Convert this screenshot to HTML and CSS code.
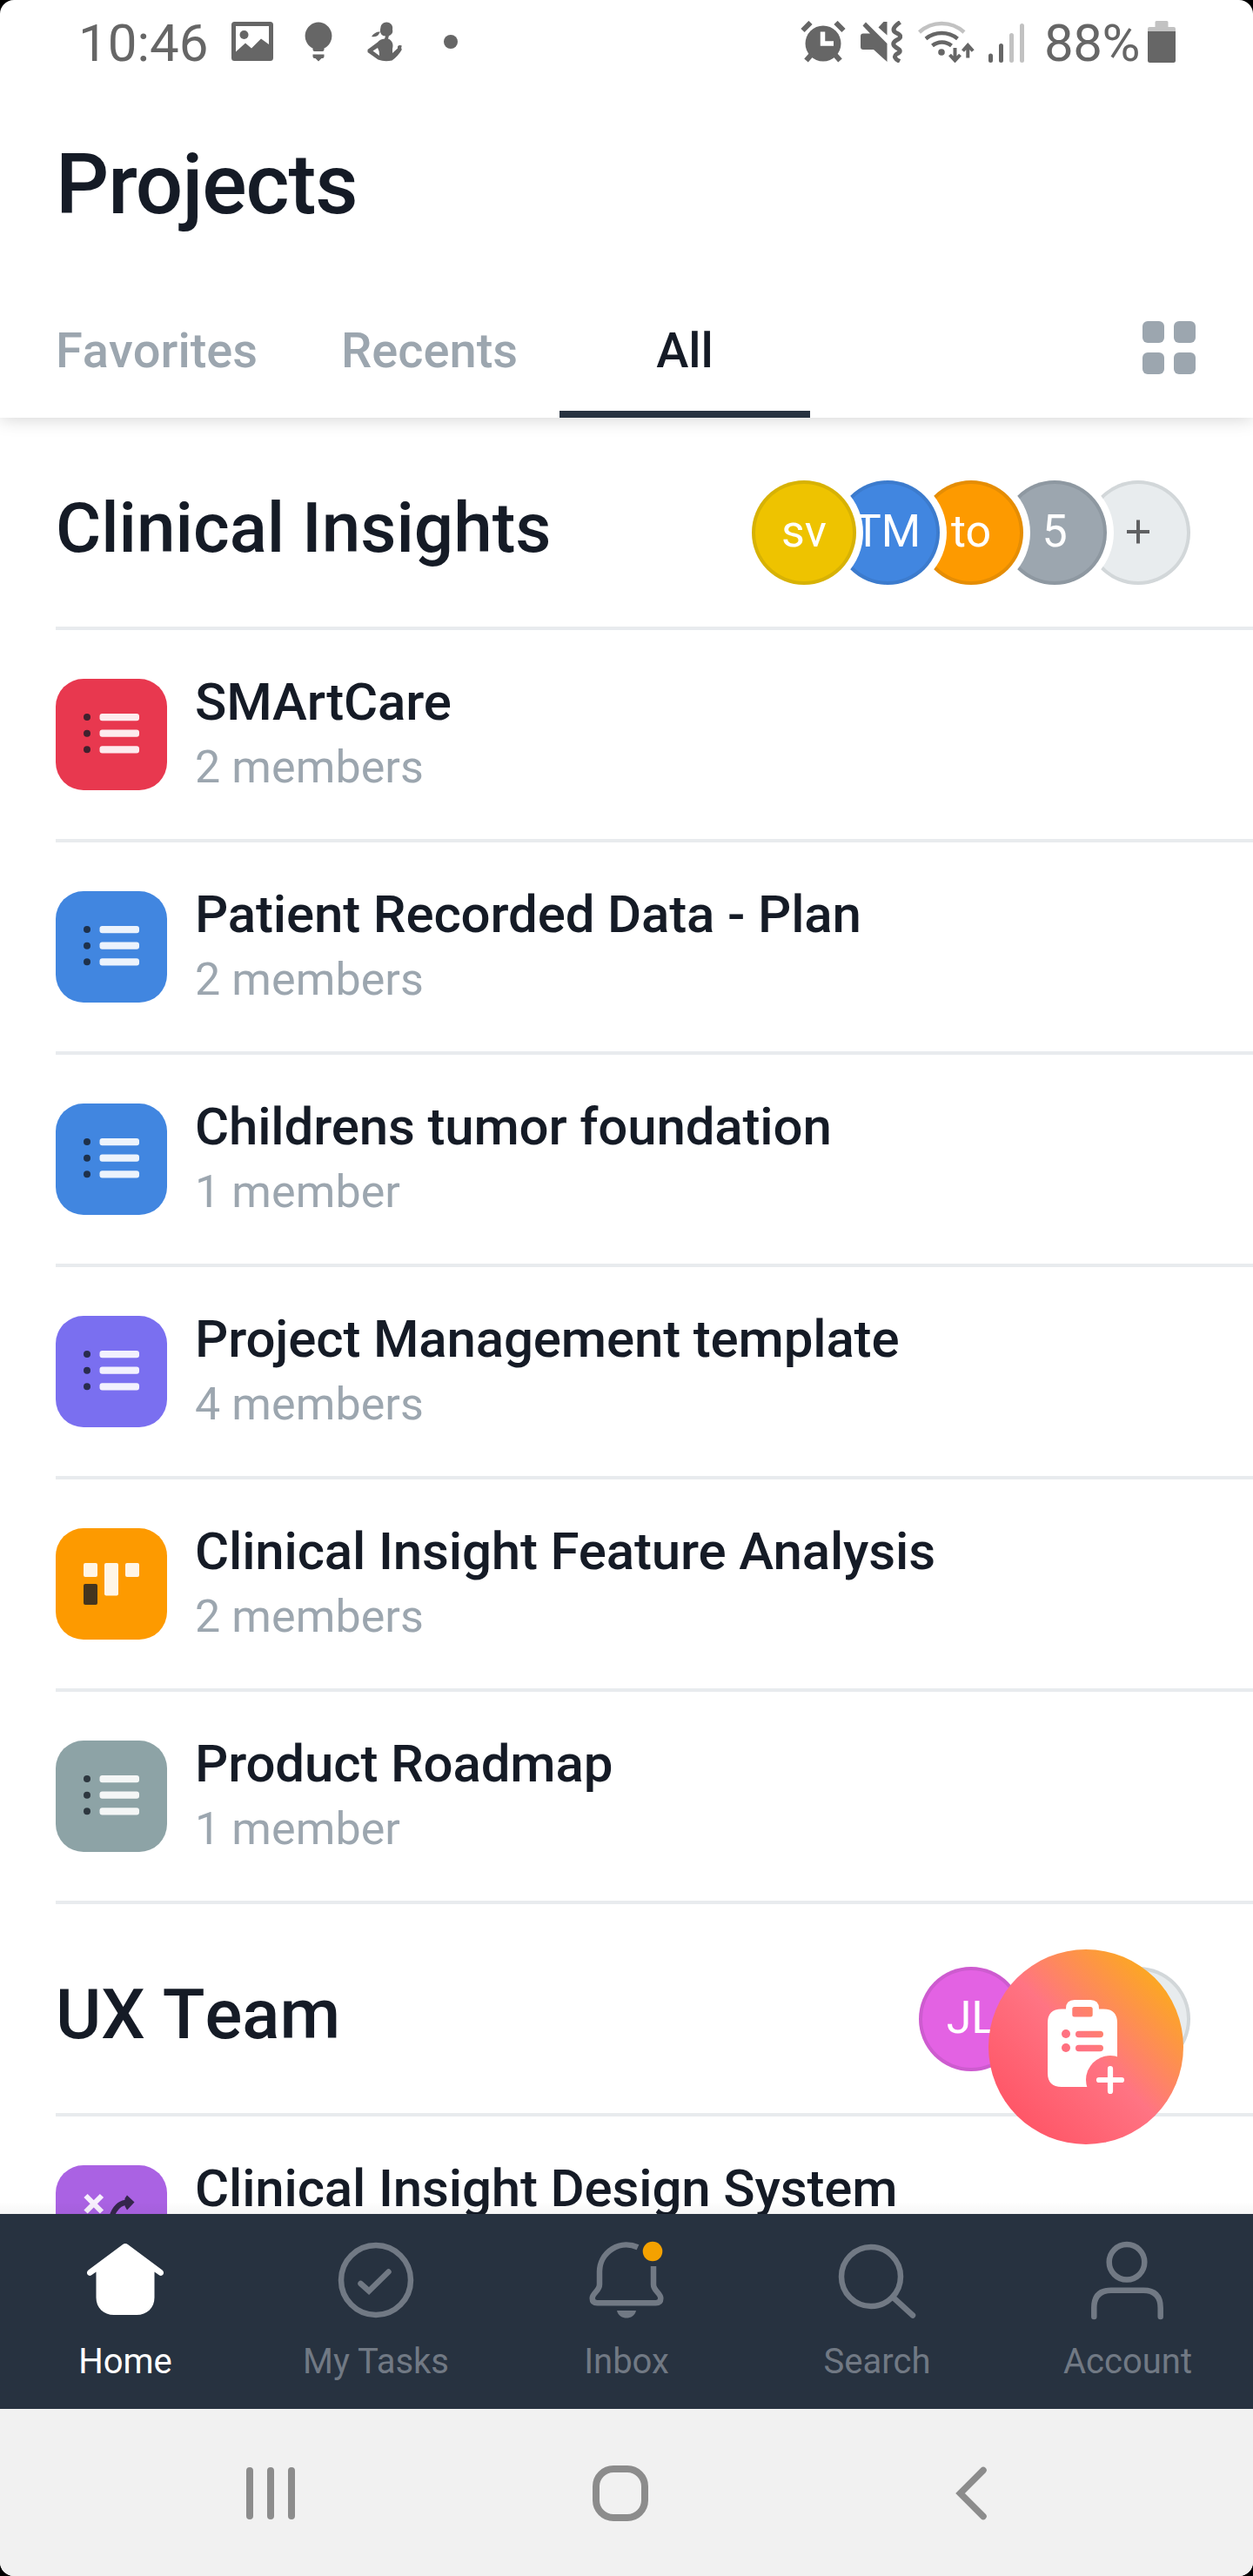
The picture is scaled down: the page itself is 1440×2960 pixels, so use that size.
FILE: index.html
```html
<!DOCTYPE html>
<html lang="en">
<head>
<meta charset="utf-8">
<title>Projects</title>
<link rel="stylesheet" href="styles.css">
</head>
<body>
<svg width="0" height="0" class="defs" aria-hidden="true">
  <symbol id="list" viewBox="0 0 128 128">
    <g fill="#151b26" fill-opacity=".8"><circle cx="36" cy="44" r="4"/><circle cx="36" cy="62.7" r="4"/><circle cx="36" cy="81.3" r="4"/></g>
    <g fill="#fff" fill-opacity=".9"><rect x="50.5" y="40" width="45.500" height="8.300" rx="3"/><rect x="50.500" y="58.500" width="45.500" height="8.300" rx="3"/><rect x="50.500" y="77.200" width="45.500" height="8.300" rx="3"/></g>
  </symbol>
</svg>
<div class="screen">
  <div class="status">
    <span class="clock">10:46</span>
    <svg class="st-image" width="48" height="48" viewBox="0 0 48 48"><path fill="#666" fill-rule="evenodd" d="M3.500 1H44.500Q48 1 48 4.500V42.500Q48 46 44.500 46H3.500Q0 46 0 42.500V4.500Q0 1 3.500 1ZM5 6V35.500L16 25.500L23 31.500L34 20.500L43 27V6Z"/><circle cx="14.500" cy="16" r="5" fill="#666"/></svg>
    <svg class="st-bulb" width="32" height="48" viewBox="0 0 32 48"><path fill="#666" d="M16 1.500a15.800 15.800 0 0 1 6.500 30V33Q22.500 35 20.500 35H11.500Q9.500 35 9.500 33V31.500A15.800 15.800 0 0 1 16 1.500ZM9.500 38.500H22.500V41Q22.500 43 20.500 43H19.500L16 46.500L12.500 43H11.500Q9.500 43 9.500 41Z"/></svg>
    <svg class="st-person" width="40" height="48" viewBox="0 0 40 48"><g fill="#666"><path d="M22 1.500C27.500 1.500 30 6 29 10C30 13 28 16.500 25 17L24 20.500C29 22.500 30.500 27 29 32V37L35 31.500V29.500Q35.500 27.500 38 28L39.800 28.500Q38.500 31 39.800 33Q36 40 28.500 45.500Q20 47.500 12.500 44.500L.5 36V33L12 24.500Q14.500 21 20 20.500L21 17.500C17 17.500 14.500 14.500 15 10Q15 2 22 1.500Z"/><path d="M15 12.500Q9 12 5 18Q10 19 12.500 16.500Z"/></g><path d="M12 31L6.500 34.500L14 40Q14.500 35 12 31Z" fill="#fff"/></svg>
    <svg class="st-dot" width="16" height="48" viewBox="0 0 16 48"><circle cx="8" cy="24" r="8" fill="#666"/></svg>
    <div class="spacer"></div>
    <svg class="st-alarm" width="52" height="48" viewBox="0 0 52 48"><g stroke="#666" stroke-width="6"><path d="M2.500 11L11.500 2M49.500 11L40.500 2M6.500 45.500L14 37M45.500 45.500L38 37"/></g><circle cx="26" cy="26" r="20.500" fill="#666"/><path d="M25.500 12.500V26H38" fill="none" stroke="#fff" stroke-width="5.500"/></svg>
    <svg class="st-mute" width="48" height="48" viewBox="0 0 48 48"><path fill="#666" d="M3 14.500H11L2.500 5.500L6 1.500L30.500 26V47L15 33H3Q0 33 0 30V17.500Q0 14.500 3 14.500ZM30.500 1V16.500L20.500 7.500L26.500 1Z"/><path d="M45.500 1.500Q33 10 41.500 14Q50 18 41.500 22Q34 26.500 41.500 31Q49 35 41.500 38Q36 42 45 46.500" fill="none" stroke="#666" stroke-width="5"/></svg>
    <svg class="st-wifi" width="65" height="48" viewBox="0 0 65 48"><g fill="none" stroke-width="4.500"><path stroke="#c2c2c2" d="M1.500 13A38 38 0 0 1 53 13"/><path stroke="#666" d="M9 20.500A29 29 0 0 1 45.500 20.500M16.500 28.500A17 17 0 0 1 38.500 28.500"/></g><circle cx="27" cy="36" r="3.800" fill="#666"/><path d="M42.500 31V46M36.500 39L42.500 45.500L48.500 39M57.300 42.500V28M51.500 34.500L57.300 28L63.200 34.500" fill="none" stroke="#666" stroke-width="4"/></svg>
    <svg class="st-signal" width="42" height="48" viewBox="0 0 42 48"><g stroke-width="5" stroke-linecap="round"><path stroke="#666" d="M2.500 40V45.500M14.500 28.500V45.500"/><path stroke="#c2c2c2" d="M26.500 16.500V45.500M38.500 5.500V45.500"/></g></svg>
    <span class="percent">88%</span>
    <svg class="st-battery" width="32" height="48" viewBox="0 0 32 48"><path fill="#c2c2c2" d="M10 0H22Q23.500 0 23.500 1.500V7H30Q32 7 32 9V14H0V9Q0 7 2 7H8.500V1.500Q8.500 0 10 0Z"/><path fill="#666" d="M0 12H32V45.500Q32 48 29.500 48H2.500Q0 48 0 45.500Z"/></svg>
  </div>

  <header class="header">
    <h1>Projects</h1>
    <nav class="tabs">
      <span class="tab fav">Favorites</span>
      <span class="tab rec">Recents</span>
      <span class="tab all">All</span>
      <div class="grid-toggle"><i></i><i></i><i></i><i></i></div>
    </nav>
  </header>

  <main class="content">
    <section>
      <div class="section-head">
        <h2>Clinical Insights</h2>
        <div class="avatars">
          <span class="avatar yellow">sv</span><span class="avatar blue">TM</span><span class="avatar orange">to</span><span class="avatar gray">5</span><span class="avatar add"><svg width="26" height="28" viewBox="0 0 26 28"><path d="M13 0.500V27.500M0 14H26" stroke="#606163" stroke-width="4"/></svg></span>
        </div>
      </div>
      <div class="row"><div class="tile red"><svg><use href="#list"/></svg></div><div class="info"><h3>SMArtCare</h3><p>2 members</p></div></div>
      <div class="row"><div class="tile blue"><svg><use href="#list"/></svg></div><div class="info"><h3>Patient Recorded Data - Plan</h3><p>2 members</p></div></div>
      <div class="row"><div class="tile blue"><svg><use href="#list"/></svg></div><div class="info"><h3>Childrens tumor foundation</h3><p>1 member</p></div></div>
      <div class="row"><div class="tile violet"><svg><use href="#list"/></svg></div><div class="info"><h3>Project Management template</h3><p>4 members</p></div></div>
      <div class="row"><div class="tile orange"><svg viewBox="0 0 128 128"><g fill="#fff" fill-opacity=".9"><rect x="32" y="40" width="16" height="16" rx="2"/><rect x="56" y="40" width="16" height="37.500" rx="2"/><rect x="80" y="40" width="16" height="16" rx="2"/></g><rect x="32" y="64" width="16" height="24" rx="2" fill="#151b26" fill-opacity=".8"/></svg></div><div class="info"><h3>Clinical Insight Feature Analysis</h3><p>2 members</p></div></div>
      <div class="row"><div class="tile sage"><svg><use href="#list"/></svg></div><div class="info"><h3>Product Roadmap</h3><p>1 member</p></div></div>
    </section>
    <section>
      <div class="section-head">
        <h2>UX Team</h2>
        <div class="avatars">
          <span class="avatar pink">JL</span><span class="avatar gray"></span><span class="avatar add"></span>
        </div>
      </div>
      <div class="row"><div class="tile purple"><svg viewBox="0 0 128 128"><path d="M34.500 35L53 53.500M53 35L34.500 53.500" stroke="#fff" stroke-opacity=".9" stroke-width="6"/><path d="M63 64Q68 43 83 42.500" fill="none" stroke="#35264c" stroke-width="6"/><path d="M82 34.500L90.500 42.500L82 51.500L79.500 47V38Z" fill="#35264c"/></svg></div><div class="info"><h3>Clinical Insight Design System</h3></div></div>
    </section>
    <div class="edge-shade"></div>
  </main>

  <button class="fab" aria-label="Add task">
    <svg width="224" height="224" viewBox="0 0 224 224">
      <defs><mask id="cut"><rect width="224" height="224" fill="#fff"/><rect x="96.300" y="66" width="23.400" height="11.500" rx="2.500"/><circle cx="89" cy="97" r="5"/><circle cx="89" cy="113" r="5"/><rect x="100" y="93.800" width="32" height="7.500" rx="3.700"/><rect x="100" y="109.800" width="32" height="7.500" rx="3.700"/><circle cx="140" cy="150" r="28"/></mask></defs>
      <path mask="url(#cut)" fill="#fff" d="M84 68.500H89V68Q89 58 99 58H117Q127 58 127 68V68.500H132Q148 68.500 148 84.500V142Q148 158 132 158H84Q68 158 68 142V84.500Q68 68.500 84 68.500Z"/>
      <path d="M140 137V163M127 150H153" stroke="#fff" stroke-width="6.200" stroke-linecap="round"/>
    </svg>
  </button>

  <nav class="bottom">
    <a class="item active"><svg viewBox="0 0 96 96"><path fill="#fff" d="M44.800 7.200Q48 4.800 51.200 7.200L90.500 36.500Q93 38.700 91.500 41.500Q89.500 44 86.500 42L81.500 38.500V68C81.500 80 73 88 61 88H35C23 88 14.500 80 14.500 68V38.500L9.500 42Q6.500 44 4.500 41.500Q3 38.700 5.500 36.500Z"/></svg><span>Home</span></a>
    <a class="item"><svg viewBox="0 0 96 96"><circle cx="48" cy="48" r="40"/><path d="M30.500 52L40 60.500L62.500 38.500" stroke-linecap="round"/></svg><span>My Tasks</span></a>
    <a class="item"><svg viewBox="0 0 96 96"><path d="M61 10.300A31 31 0 0 0 17 38V53C17 60.500 8.700 63 8.700 69Q8.700 74.300 14.500 74.300H81.500Q87.300 74.300 87.300 69C87.300 63 79 60.500 79 53V32"/><path d="M37 83H59C58 89 52.500 91.500 48 91.500S38 89 37 83Z" fill="#717984" stroke="none"/><circle cx="78" cy="15" r="11.300" fill="#f4a100" stroke="none"/></svg><span>Inbox</span></a>
    <a class="item"><svg viewBox="0 0 96 96"><circle cx="41" cy="44" r="34"/><path d="M66 67.500L89 88.500" stroke-linecap="round"/></svg><span>Search</span></a>
    <a class="item"><svg viewBox="0 0 96 96"><circle cx="47" cy="27.300" r="20.300"/><path d="M9.300 90V80Q9.300 59.800 29 59.800H66Q85.700 59.800 85.700 80V90" stroke-linecap="round"/></svg><span>Account</span></a>
  </nav>

  <div class="sysnav">
    <svg width="56" height="64" viewBox="0 0 56 64"><path d="M4 6V58M28 6V58M52 6V58" fill="none" stroke="#8c8c8c" stroke-width="8" stroke-linecap="round"/></svg>
    <svg class="sys-home" width="64" height="64" viewBox="0 0 64 64"><rect x="4" y="4" width="56" height="56" rx="20" fill="none" stroke="#8c8c8c" stroke-width="8"/></svg>
    <svg width="36" height="64" viewBox="0 0 36 64"><path d="M32 5.500L5.500 32L32 58.500" fill="none" stroke="#8c8c8c" stroke-width="7.500" stroke-linecap="round"/></svg>
  </div>
</div>
</body>
</html>
```
FILE: styles.css
```css
* { box-sizing: border-box; }
body { margin: 0; background: #000; font-family: Roboto, "Liberation Sans", sans-serif; color: #151b26; }
h1, h2, h3, p { margin: 0; font-weight: 500; }
svg { display: block; flex: none; }
.defs { position: absolute; }
.screen { position: relative; width: 1440px; height: 2960px; background: #fff; border-radius: 16px; overflow: hidden; display: flex; flex-direction: column; }

.status { height: 96px; flex: none; display: flex; align-items: center; padding: 0 89px 0 90px; color: #666; font-size: 60px; line-height: 60px; white-space: nowrap; }
.clock { width: 176px; padding-top: 4px; }
.percent { width: 119px; padding-top: 4px; letter-spacing: -.5px; }
.st-bulb { margin-left: 36px; }
.st-person { margin-left: 40px; }
.st-dot { margin-left: 48px; }
.spacer { flex: 1; }
.st-mute { margin-left: 17px; }
.st-wifi { margin-left: 18px; }
.st-signal { margin-left: 16px; margin-right: 22px; }

.header { position: relative; z-index: 2; height: 384px; flex: none; display: flex; flex-direction: column; background: #fff; box-shadow: 0 1px 20px rgba(0, 0, 0, .18); clip-path: inset(0 0 -24px 0); }
h1 { margin: 60px 0 0 64px; font-size: 96px; line-height: 112px; letter-spacing: -1.1px; }
.tabs { margin-top: auto; height: 160px; display: flex; align-items: stretch; padding-right: 66px; }
.tab { font-size: 56px; line-height: 166px; font-weight: 500; font-kerning: none; color: #9ca6af; white-space: nowrap; }
.fav { width: 328px; margin-left: 64px; }
.rec { width: 251px; }
.all { width: 288px; color: #151b26; text-align: center; border-bottom: 8px solid #273240; }
.grid-toggle { margin: 49px 0 0 auto; display: grid; grid-template-columns: 25px 25px; grid-auto-rows: 25px; gap: 11px; align-content: start; }
.grid-toggle i { background: #9ca6af; border-radius: 6px; }

.content { position: relative; height: 2064px; flex: none; overflow: hidden; }
.section-head { height: 244px; margin-left: 64px; padding: 0 72px 0 0; display: flex; align-items: center; justify-content: space-between; border-bottom: 4px solid #e8ebee; }
h2 { font-size: 80px; line-height: 96px; padding-top: 13px; font-kerning: none; }
.avatars { display: flex; padding-top: 24px; }
.avatar { position: relative; width: 120px; height: 120px; margin-left: -24px; border-radius: 50%; display: flex; align-items: center; justify-content: center; color: #fff; font-size: 52px; line-height: 60px; padding-bottom: 3px; box-shadow: inset 0 0 0 4px rgba(21, 27, 38, .1), 0 0 0 8px #fff; }
.avatar:nth-child(1) { z-index: 5; margin-left: 0; }
.avatar:nth-child(2) { z-index: 4; }
.avatar:nth-child(3) { z-index: 3; }
.avatar:nth-child(4) { z-index: 2; }
.yellow { background: #eec300; }
.blue { background: #4186e0; }
.orange { background: #fd9a00; }
.gray { background: #9ca6af; }
.add { background: #e8ecee; }
.pink { background: #e362e3; }

.row { height: 244px; margin-left: 64px; display: flex; gap: 32px; border-bottom: 4px solid #e8ebee; }
.tile { width: 128px; height: 128px; margin-top: 56px; border-radius: 32px; flex: none; }
.tile svg { width: 128px; height: 128px; }
.red { background: #e8384f; }
.violet { background: #7a6ff0; }
.sage { background: #8da3a6; }
.purple { background: #aa62e3; }
.info { padding-top: 44px; white-space: nowrap; }
h3 { font-size: 60px; line-height: 77px; letter-spacing: -.15px; }
p { font-size: 52px; line-height: 74px; font-weight: 400; letter-spacing: .1px; color: #9ca6af; }
.edge-shade { position: absolute; left: 0; right: 0; bottom: 0; height: 14px; background: linear-gradient(rgba(0, 0, 0, 0), rgba(0, 0, 0, .04)); }

.fab { position: absolute; left: 1136px; top: 2240px; width: 224px; height: 224px; padding: 0; border: 0; border-radius: 50%; background: linear-gradient(45deg, #ff5768 15%, #ff7483 50%, #fca625 85%); z-index: 6; }

.bottom { height: 224px; flex: none; display: flex; background: #273240; color: #717984; }
.item { width: 288px; padding-top: 28px; display: flex; flex-direction: column; align-items: center; font-size: 40px; line-height: 48px; }
.item svg { width: 96px; height: 96px; margin-bottom: 22px; fill: none; stroke: #717984; stroke-width: 6.5px; }
.item.active { color: #fff; }
.item.active svg { stroke: none; }

.sysnav { height: 192px; flex: none; display: flex; align-items: center; padding: 2px 0 0 283px; background: #f1f1f1; }
.sys-home { margin: 0 353px 0 342px; }
```
